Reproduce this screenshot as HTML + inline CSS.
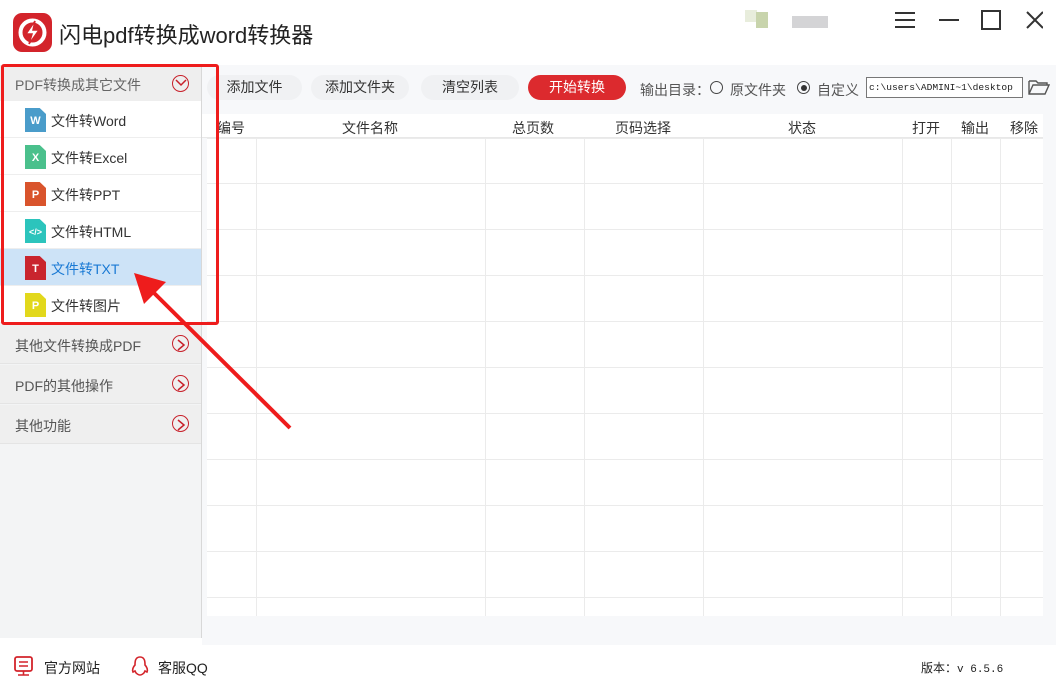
<!DOCTYPE html>
<html><head><meta charset="utf-8"><style>
*{margin:0;padding:0;box-sizing:border-box}
body{width:1056px;height:687px;overflow:hidden;background:#fff;font-family:"Liberation Sans","Noto Sans CJK SC",sans-serif;position:relative;color:#333}
.a{position:absolute}
.side{left:0;top:65px;width:202px;height:573px;background:#f3f4f5;border-right:1px solid #d8d8d8}
.hd{left:0;width:201px;height:37px;background:#eeeeee;font-size:14px;color:#666;padding:10px 0 0 15px}
.it{left:0;width:201px;height:37px;background:#fff;border-bottom:1px solid #eee;font-size:14px;color:#333;padding:10px 0 0 51px}
.ic{position:absolute;left:25px;top:7px;width:21px;height:24px;color:#fff;font-size:11px;font-weight:bold;text-align:center;line-height:26px;clip-path:polygon(0 0,70% 0,100% 25%,100% 100%,0 100%)}
.grp{left:0;width:201px;height:39px;background:#efefef;border-bottom:1px solid #e4e4e4;font-size:14px;color:#555;padding:11px 0 0 15px}
.circ{position:absolute;right:12px;top:10px;width:17px;height:17px;border:1.5px solid #c8202a;border-radius:50%}
.btn{top:75px;height:25px;border-radius:13px;background:#f0f1f3;font-size:14px;text-align:center;line-height:25px;color:#333}
.th{top:118px;font-size:14px;color:#333}
</style></head><body>
<div class="a" style="left:13px;top:13px;width:39px;height:39px;border-radius:9px;background:#d3242b"></div>
<svg class="a" style="left:13px;top:13px" width="39" height="39"><circle cx="19.5" cy="19.5" r="12" fill="none" stroke="#fff" stroke-width="4"/><path d="M22 8 L13 21 H19 L16 31 L26 17 H20 Z" fill="#fff" stroke="#d3242b" stroke-width="1.5"/></svg>
<div class="a" style="left:59px;top:18px;font-size:22px;color:#222">闪电pdf转换成word转换器</div>
<div class="a" style="left:745px;top:10px;width:12px;height:12px;background:#e8eddc"></div><div class="a" style="left:756px;top:12px;width:12px;height:16px;background:#c8d4ac"></div>
<div class="a" style="left:792px;top:16px;width:36px;height:12px;background:#d4d4d6"></div>
<svg class="a" style="left:893px;top:10px" width="150" height="22"><g stroke="#333" stroke-width="2" fill="none"><path d="M2 3H22M2 10H22M2 17H22"/><path d="M46 10H66"/><rect x="89" y="1" width="18" height="18"/><path d="M134 2L150 18M150 2L134 18"/></g></svg>
<div class="a" style="left:202px;top:65px;width:854px;height:580px;background:#f7f8fa"></div>
<div class="a" style="left:207px;top:138px;width:836px;height:478px;background:#fff"></div>
<svg class="a" style="left:207px;top:110px" width="849" height="510">
<g stroke="#ebebeb" stroke-width="1">
<path d="M0 28.5H836"/>
<path d="M0 73.5H836M0 119.5H836M0 165.5H836M0 211.5H836M0 257.5H836M0 303.5H836M0 349.5H836M0 395.5H836M0 441.5H836M0 487.5H836"/>
<path d="M49.5 28V506M278.5 28V506M377.5 28V506M496.5 28V506M695.5 28V506M744.5 28V506M793.5 28V506"/>
</g></svg>
<div class="a" style="left:202px;top:114px;width:841px;height:24px;background:#fff;border-bottom:1px solid #e8e8e8"></div>
<div class="th a" style="left:217px">编号</div><div class="th a" style="left:342px">文件名称</div><div class="th a" style="left:512px">总页数</div><div class="th a" style="left:615px">页码选择</div><div class="th a" style="left:788px">状态</div><div class="th a" style="left:912px">打开</div><div class="th a" style="left:961px">输出</div><div class="th a" style="left:1010px">移除</div>
<div class="btn a" style="left:207px;width:95px">添加文件</div>
<div class="btn a" style="left:311px;width:98px">添加文件夹</div>
<div class="btn a" style="left:421px;width:98px">清空列表</div>
<div class="btn a" style="left:528px;width:98px;background:#dc2a2e;color:#fff">开始转换</div>
<div class="a" style="left:640px;top:80px;font-size:14px;color:#555">输出目录：</div>
<div class="a" style="left:710px;top:81px;width:13px;height:13px;border:1.3px solid #444;border-radius:50%"></div>
<div class="a" style="left:730px;top:80px;font-size:14px;color:#555">原文件夹</div>
<div class="a" style="left:797px;top:81px;width:13px;height:13px;border:1.3px solid #444;border-radius:50%"><div style="margin:2.5px;width:6px;height:6px;border-radius:50%;background:#333"></div></div>
<div class="a" style="left:817px;top:80px;font-size:14px;color:#555">自定义</div>
<div class="a" style="left:866px;top:77px;width:157px;height:21px;border:1px solid #777;background:#fff;font-family:'Liberation Mono',monospace;font-size:9.6px;line-height:19px;padding-left:2px;white-space:nowrap;overflow:hidden;color:#222">c:\users\ADMINI~1\desktop</div>
<svg class="a" style="left:1028px;top:78px" width="22" height="18"><path d="M1 3H8L10 5H19V7M1 3V16H17L21 7H5L1 16" fill="none" stroke="#555" stroke-width="1.4"/></svg>
<div class="side a"></div>
<div class="hd a" style="top:65px">PDF转换成其它文件<div class="circ" style="top:10px"></div></div>
<svg class="a" style="left:175px;top:78px" width="12" height="10"><path d="M1 2L6 7L11 2" fill="none" stroke="#c8202a" stroke-width="1.5"/></svg>
<div class="it a" style="top:101px"><div class="ic" style="background:#4a9cca">W</div>文件转Word</div>
<div class="it a" style="top:138px"><div class="ic" style="background:#4ac08c">X</div>文件转Excel</div>
<div class="it a" style="top:175px"><div class="ic" style="background:#d9542c">P</div>文件转PPT</div>
<div class="it a" style="top:212px"><div class="ic" style="background:#2cc4bc;font-size:9px">&lt;/&gt;</div>文件转HTML</div>
<div class="it a" style="top:249px;background:#cde3f7;color:#1a7ad4"><div class="ic" style="background:#c9252e">T</div>文件转TXT</div>
<div class="it a" style="top:286px"><div class="ic" style="background:#e2d81c">P</div>文件转图片</div>
<div class="grp a" style="top:325px">其他文件转换成PDF<div class="circ"></div></div>
<div class="grp a" style="top:365px">PDF的其他操作<div class="circ"></div></div>
<div class="grp a" style="top:405px">其他功能<div class="circ"></div></div>
<svg class="a" style="left:174px;top:339px" width="14" height="100"><g fill="none" stroke="#c8202a" stroke-width="1.5"><path d="M4 1L10 6L4 11"/><path d="M4 41L10 46L4 51"/><path d="M4 81L10 86L4 91"/></g></svg>
<div class="a" style="left:1px;top:64px;width:218px;height:261px;border:3px solid #ee1c1c;border-radius:3px"></div>
<svg class="a" style="left:120px;top:260px" width="180" height="180"><path d="M170 168L25 24" stroke="#ee1c1c" stroke-width="4"/><path d="M14 13L46 22L24 44Z" fill="#ee1c1c"/></svg>
<div class="a" style="left:0;top:645px;width:1056px;height:42px;background:#fff"></div>
<svg class="a" style="left:13px;top:656px" width="22" height="22"><rect x="2" y="1" width="17" height="14" rx="2" fill="none" stroke="#d3242b" stroke-width="1.8"/><path d="M6 6H15M6 10H15M5 19H16M10.5 15V19" stroke="#d3242b" stroke-width="1.6"/></svg>
<div class="a" style="left:44px;top:658px;font-size:14px;color:#222">官方网站</div>
<svg class="a" style="left:130px;top:655px" width="20" height="22"><path d="M10 2C5 2 5 7 5 10C3 12 2 15 3 17L5 16C6 19 9 20 10 20C11 20 14 19 15 16L17 17C18 15 17 12 15 10C15 7 15 2 10 2Z" fill="none" stroke="#d3242b" stroke-width="1.6"/></svg>
<div class="a" style="left:158px;top:658px;font-size:14px;color:#222">客服QQ</div>
<div class="a" style="left:921px;top:659px;font-size:12px;color:#222">版本：<span style="font-family:'Liberation Mono',monospace;font-size:11px">v 6.5.6</span></div>
</body></html>
